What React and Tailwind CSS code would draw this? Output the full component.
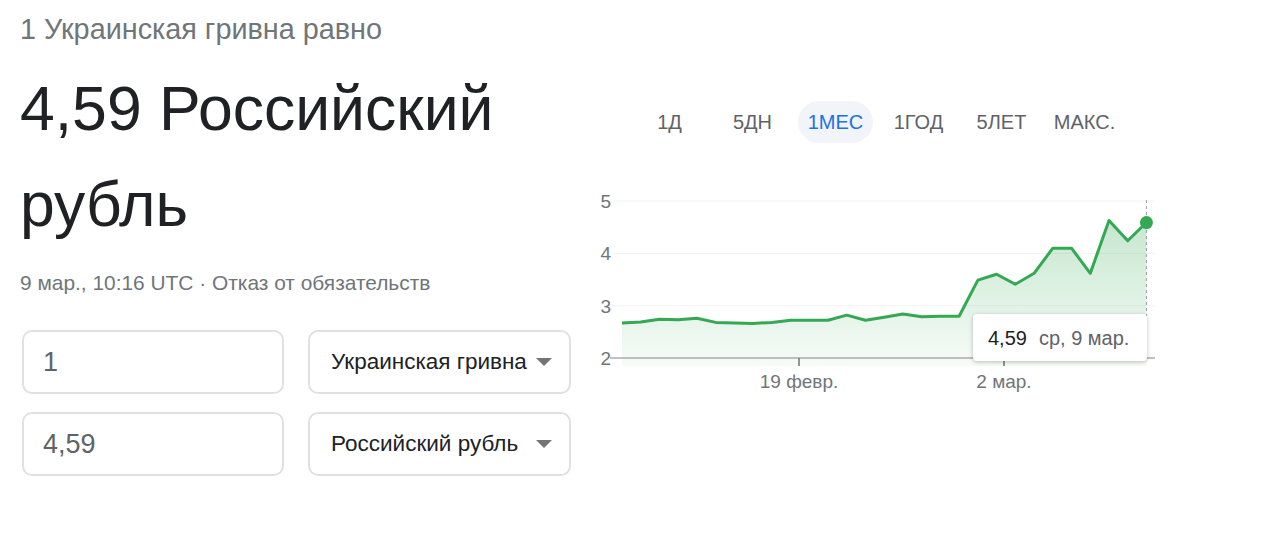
import React from 'react';

const tabs = ['1Д', '5ДН', '1МЕС', '1ГОД', '5ЛЕТ', 'МАКС.'];

// rate values for the month, one per day
const values = [
  2.67, 2.69, 2.74, 2.73, 2.76, 2.68, 2.67, 2.66, 2.68, 2.72, 2.72, 2.72,
  2.82, 2.72, 2.78, 2.84, 2.79, 2.8, 2.8, 3.49, 3.6, 3.41, 3.62, 4.1, 4.1,
  3.62, 4.63, 4.24, 4.59,
];

const yOf = (v) => 178 - (v - 2) * 52.3;
const xOf = (i) => 32 + i * 18.73;

const Chart = () => {
  const pts = values.map((v, i) => `${xOf(i).toFixed(1)},${yOf(v).toFixed(1)}`);
  const line = pts.join(' ');
  const last = values.length - 1;
  const area = `${xOf(0)},186 ${line} ${xOf(last)},186`;

  return (
    <div className="relative w-[570px] h-[220px]">
      <svg width="570" height="220" className="block">
        <defs>
          <linearGradient id="fill" x1="0" y1="0" x2="0" y2="1">
            <stop offset="0%" stopColor="#34a853" stopOpacity="0.28" />
            <stop offset="100%" stopColor="#34a853" stopOpacity="0.04" />
          </linearGradient>
        </defs>
        {[5, 4, 3].map((v) => (
          <line key={v} x1="22" x2="565" y1={yOf(v)} y2={yOf(v)} stroke="#f1f3f4" strokeWidth="1" />
        ))}
        <polygon points={area} fill="url(#fill)" />
        <line x1="20" x2="565" y1="178" y2="178" stroke="#80868b" strokeWidth="1" />
        <line x1="209" x2="209" y1="178" y2="186" stroke="#70757a" strokeWidth="1.5" />
        <line x1="414" x2="414" y1="178" y2="186" stroke="#70757a" strokeWidth="1.5" />
        <line x1={xOf(last)} x2={xOf(last)} y1="20" y2="178" stroke="#9aa0a6" strokeWidth="1" strokeDasharray="3 3" />
        <polyline points={line} fill="none" stroke="#34a853" strokeWidth="3" strokeLinejoin="round" />
        <circle cx={xOf(last)} cy={yOf(values[last])} r="6.5" fill="#34a853" />
        {[5, 4, 3, 2].map((v) => (
          <text
            key={v}
            x="21"
            y={yOf(v) + 7}
            textAnchor="end"
            fill="#70757a"
            fontSize="19"
            fontFamily="'Liberation Sans', Arial, sans-serif"
          >
            {v}
          </text>
        ))}
        <text x="209" y="208" textAnchor="middle" fill="#70757a" fontSize="19" fontFamily="'Liberation Sans', Arial, sans-serif">
          19 февр.
        </text>
        <text x="414" y="208" textAnchor="middle" fill="#70757a" fontSize="19" fontFamily="'Liberation Sans', Arial, sans-serif">
          2 мар.
        </text>
      </svg>
      <div className="absolute left-[383px] top-[134px] w-[174px] h-[47px] bg-white rounded-[4px] shadow-[0_1px_4px_rgba(0,0,0,0.25)] flex items-center pl-[15px] text-[20px]">
        <span className="text-[#202124]">4,59</span>
        <span className="ml-[12px] text-[#5f6368]">ср, 9 мар.</span>
      </div>
    </div>
  );
};

const Select = ({ label }) => (
  <div className="w-[263px] h-[64px] border-2 border-[#e0e1e4] rounded-[10px] flex items-center justify-between pl-[21px] pr-[17px]">
    <span className="text-[22.5px] text-[#202124]">{label}</span>
    <svg width="16" height="8" viewBox="0 0 16 8">
      <path d="M0 0 L16 0 L8 8 Z" fill="#757575" />
    </svg>
  </div>
);

const Amount = ({ value }) => (
  <div className="w-[262px] h-[64px] border-2 border-[#e0e1e4] rounded-[10px] flex items-center pl-[19px] text-[27px] text-[#5f6368]">
    {value}
  </div>
);

const App = () => {
  return (
    <div className="w-[1280px] h-[538px] bg-white flex font-['Liberation_Sans',Arial,sans-serif] overflow-hidden">
      <div className="w-[590px] pl-[20px] pt-[11px]">
        <div className="text-[28.8px] leading-[36px] text-[#70757a]">1 Украинская гривна равно</div>
        <div className="mt-[13px] text-[62.5px] leading-[96px] text-[#202124]">4,59 Российский рубль</div>
        <div className="mt-[17px] text-[20.9px] leading-[28px] text-[#70757a]">
          9 мар., 10:16 UTC · Отказ от обязательств
        </div>
        <div className="mt-[33px] ml-[2px] flex flex-col gap-[18px]">
          <div className="flex gap-[24px]">
            <Amount value="1" />
            <Select label="Украинская гривна" />
          </div>
          <div className="flex gap-[24px]">
            <Amount value="4,59" />
            <Select label="Российский рубль" />
          </div>
        </div>
      </div>
      <div className="flex-1 flex flex-col">
        <div className="mt-[101px] ml-[38px] flex">
          {tabs.map((t) => (
            <div key={t} className="w-[83px] h-[42px] flex items-center justify-center">
              {t === '1МЕС' ? (
                <span className="w-[75px] h-[42px] rounded-full bg-[#f1f4f9] flex items-center justify-center text-[20px] text-[#1a73e8]">
                  {t}
                </span>
              ) : (
                <span className="text-[20px] text-[#5f6368]">{t}</span>
              )}
            </div>
          ))}
        </div>
        <div className="mt-[37px]">
          <Chart />
        </div>
      </div>
    </div>
  );
};

export default App;
